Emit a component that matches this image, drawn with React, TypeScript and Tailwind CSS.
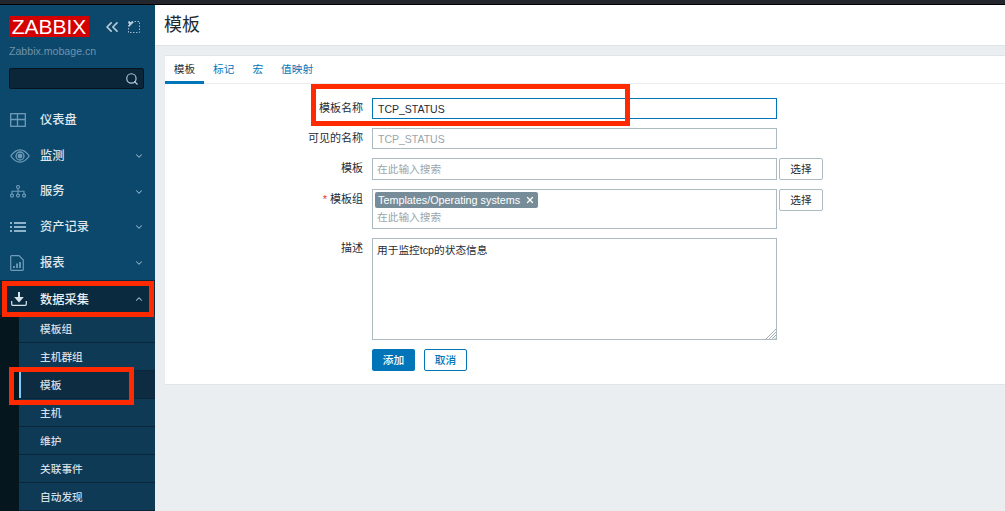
import { ChevronDown, ChevronUp, ChevronsLeft, Search, X } from 'lucide-react';
import type { ReactNode } from 'react';

const cjk = "font-['Liberation_Sans','Noto_Sans_CJK_SC',sans-serif]";

const iconDashboard = (
  <svg width="16" height="14" viewBox="0 0 16 14" fill="none" stroke="#6f9bb8" strokeWidth="1.3">
    <rect x="0.7" y="0.7" width="14.6" height="12.6" />
    <path d="M0.7 6.5H15.3M7.5 0.7V13.3" />
  </svg>
);
const iconEye = (
  <svg width="20" height="14" viewBox="0 0 20 14" fill="none" stroke="#6f9bb8" strokeWidth="1.3">
    <path d="M0.8 7C4 2.4 7 0.8 10 0.8S16 2.4 19.2 7C16 11.6 13 13.2 10 13.2S4 11.6 0.8 7Z" />
    <circle cx="10" cy="7" r="4" />
    <circle cx="10" cy="7" r="1.8" fill="#6f9bb8" />
  </svg>
);
const iconServices = (
  <svg width="16" height="13" viewBox="0 0 16 13" fill="none" stroke="#6f9bb8" strokeWidth="1.1">
    <circle cx="8" cy="2" r="1.5" />
    <circle cx="2" cy="10.6" r="1.5" />
    <circle cx="8" cy="10.6" r="1.5" />
    <circle cx="14" cy="10.6" r="1.5" />
    <path d="M8 3.5V9M2 9V6.3H14V9" />
  </svg>
);
const iconList = (
  <svg width="16" height="10" viewBox="0 0 16 10" fill="#8fb3ca">
    <rect x="0" y="0" width="2" height="2" />
    <rect x="0" y="4" width="2" height="2" />
    <rect x="0" y="8" width="2" height="2" />
    <rect x="4" y="0" width="12" height="2" />
    <rect x="4" y="4" width="12" height="2" />
    <rect x="4" y="8" width="12" height="2" />
  </svg>
);
const iconReport = (
  <svg width="14" height="16" viewBox="0 0 14 16" fill="none" stroke="#6f9bb8" strokeWidth="1.2">
    <path d="M0.7 1.5A0.8 0.8 0 0 1 1.5 0.7H9L13.3 5V14.5A0.8 0.8 0 0 1 12.5 15.3H1.5A0.8 0.8 0 0 1 0.7 14.5Z" />
    <path d="M4 13V11M7 13V8.5M10 13V7" strokeWidth="1.8" />
  </svg>
);
const iconDownload = (
  <svg width="16" height="14" viewBox="0 0 16 14" fill="none" stroke="#d7e4ec" strokeWidth="1.2">
    <path d="M0.7 9V12.3A1 1 0 0 0 1.7 13.3H14.3A1 1 0 0 0 15.3 12.3V9" />
    <path d="M8 0V7" strokeWidth="2" />
    <path d="M4.5 5.5L8 9.5L11.5 5.5Z" fill="#d7e4ec" />
  </svg>
);

const menu: { label: string; icon: ReactNode; chevron: boolean }[] = [
  { label: '仪表盘', icon: iconDashboard, chevron: false },
  { label: '监测', icon: iconEye, chevron: true },
  { label: '服务', icon: iconServices, chevron: true },
  { label: '资产记录', icon: iconList, chevron: true },
  { label: '报表', icon: iconReport, chevron: true },
];

const submenu = ['模板组', '主机群组', '模板', '主机', '维护', '关联事件', '自动发现'];

function Sidebar() {
  return (
    <aside className="w-[155px] shrink-0 bg-[#0c486c] flex flex-col overflow-hidden">
      <div className="flex items-center pl-[9px] pt-[11px]">
        <div className="w-[80px] h-[21px] bg-[#d40000] text-white text-[21px] leading-[21px] text-center font-['Liberation_Sans',sans-serif]">
          ZABBIX
        </div>
        <ChevronsLeft size={20} strokeWidth={2} className="ml-[13px] text-[#b7cbd8]" />
        <svg width="12" height="12" viewBox="0 0 12 12" fill="none" className="ml-[6px]">
          <rect x="0.5" y="0.5" width="11" height="11" stroke="#9db8c9" strokeDasharray="1.5 1.5" />
          <path d="M1 1H6L1 6Z" fill="#b7cbd8" />
        </svg>
      </div>
      <div className="pl-[9px] mt-[7px] text-[10.6px] leading-[14px] text-[#6f93aa] font-['Liberation_Sans',sans-serif]">
        Zabbix.mobage.cn
      </div>
      <div className="ml-[9px] mt-[10px] w-[135px] h-[22px] bg-[#0a2638] border border-[#051520] rounded-[2px] flex items-center justify-end pr-[4px]">
        <Search size={14} strokeWidth={2} className="text-[#b7cbd8]" />
      </div>
      <nav className={`mt-[12px] ${cjk}`}>
        {menu.map((m) => (
          <div key={m.label} className="h-[35.8px] pt-[2px] flex items-center text-[12.25px] font-medium text-[#dde7ed]">
            <span className="w-[40px] pl-[10px] flex justify-start">{m.icon}</span>
            <span className="flex-1">{m.label}</span>
            {m.chevron && <ChevronDown size={10} strokeWidth={2.5} className="mr-[11px] text-[#8fb3ca]" />}
          </div>
        ))}
        <div className="h-[35px] pt-[3px] bg-[#0a2a3f] flex items-center text-[12.25px] font-medium text-[#e8eff3]">
          <span className="w-[40px] pl-[11px] flex justify-start">{iconDownload}</span>
          <span className="flex-1 pt-[2px]">数据采集</span>
          <ChevronUp size={10} strokeWidth={2.5} className="mr-[11px] text-[#b7cbd8]" />
        </div>
        <div className="bg-[#06161f] pl-[19px]">
          {submenu.map((s) => (
            <div
              key={s}
              className={`h-[28px] pt-[2px] pl-[21px] flex items-center text-[10.7px] font-medium text-[#d3dee5] border-b border-[#0a2638] ${
                s === '模板' ? 'bg-[#0d2c42] relative' : 'bg-[#0f3a56]'
              }`}
            >
              {s === '模板' && <span className="absolute left-0 top-0 bottom-0 w-[2px] bg-[#7fcbfa]" />}
              {s}
            </div>
          ))}
        </div>
      </nav>
    </aside>
  );
}

function Row({ label, required, className, children }: { label: string; required?: boolean; className?: string; children: ReactNode }) {
  return (
    <div className={`flex items-start ${className ?? ''}`}>
      <div className="w-[207px] pr-[9px] text-right text-[11px] leading-[21px] text-[#1f2c33]">
        {required && <span className="text-[#e33734] mr-[3px]">*</span>}
        {label}
      </div>
      {children}
    </div>
  );
}

function SelectButton() {
  return (
    <button className="ml-[2px] w-[44px] h-[22px] bg-white border border-[#acbbc2] rounded-[2px] text-[10.7px] text-[#1f2c33]">
      选择
    </button>
  );
}

export default function App() {
  return (
    <div className={`relative w-[1005px] h-[511px] overflow-hidden flex flex-col ${cjk}`}>
      <div className="h-[5px] shrink-0 bg-[#24262d] border-b border-black" />
      <div className="flex flex-1 min-h-0">
        <Sidebar />
        <main className="flex-1 bg-[#ebeef0] flex flex-col">
          <header className="h-[41px] shrink-0 bg-white border-b border-[#dfe4e7] pl-[9px] flex items-center text-[18px] text-[#1f2c33]">
            模板
          </header>
          <section className="ml-[10px] mt-[9px] h-[330px] bg-white border-t border-b border-[#dfe4e7]">
            <div className="h-[28px] border-b border-[#ebeef0] flex text-[10.7px] text-[#0275b8]">
              <div className="w-[39px] h-[28px] text-center leading-[26px] text-[#1f2c33] border-b-[3px] border-[#0275b8]">模板</div>
              <div className="ml-[9px] leading-[26px]">标记</div>
              <div className="ml-[18px] leading-[26px]">宏</div>
              <div className="ml-[18px] leading-[26px]">值映射</div>
            </div>
            <div className="pt-[14px]">
              <Row label="模板名称">
                <input
                  readOnly
                  value="TCP_STATUS"
                  className="w-[405px] h-[21px] border border-[#0275b8] px-[5px] text-[10.5px] text-[#1f2c33] outline-none font-['Liberation_Sans',sans-serif]"
                />
              </Row>
              <Row label="可见的名称" className="mt-[9px]">
                <input
                  readOnly
                  value="TCP_STATUS"
                  className="w-[405px] h-[21px] border border-[#acbbc2] px-[5px] text-[10.5px] text-[#9aa5ab] outline-none font-['Liberation_Sans',sans-serif]"
                />
              </Row>
              <Row label="模板" className="mt-[9px]">
                <div className="w-[405px] h-[22px] border border-[#acbbc2] px-[4px] text-[10.7px] leading-[20px] text-[#9aa5ab]">在此输入搜索</div>
                <SelectButton />
              </Row>
              <Row label="模板组" required className="mt-[9px]">
                <div className="w-[405px] h-[40px] border border-[#acbbc2] pl-[2px] pt-[2px] text-[10.7px]">
                  <div className="w-[163px] h-[16px] bg-[#768d99] rounded-[2px] text-white flex items-center pl-[3px] leading-[16px] text-[10.8px] font-['Liberation_Sans',sans-serif]">
                    <span className="whitespace-nowrap">Templates/Operating systems</span>
                    <X size={10} strokeWidth={3} className="ml-[5px] shrink-0" />
                  </div>
                  <div className="pl-[2px] mt-[1px] leading-[17px] text-[#9aa5ab]">在此输入搜索</div>
                </div>
                <SelectButton />
              </Row>
              <Row label="描述" className="mt-[9px]">
                <div className="relative w-[405px] h-[102px] border border-[#acbbc2] px-[4px] text-[10.7px] leading-[22px] text-[#1f2c33]">
                  用于监控tcp的状态信息
                  <svg width="10" height="10" viewBox="0 0 10 10" className="absolute right-0 bottom-0" stroke="#8f979b" strokeWidth="0.8">
                    <path d="M0 10L10 0M3 10L10 3M6 10L10 6M8.5 10L10 8.5" />
                  </svg>
                </div>
              </Row>
              <div className="flex pl-[207px] mt-[9px] text-[10.7px] font-medium">
                <button className="w-[43px] h-[22px] bg-[#0275b8] rounded-[2px] text-white">添加</button>
                <button className="ml-[9px] w-[43px] h-[22px] bg-white border border-[#0275b8] rounded-[2px] text-[#0275b8]">取消</button>
              </div>
            </div>
          </section>
        </main>
      </div>

      {/* red annotation boxes drawn over the screenshot */}
      <div className="absolute left-[2px] top-[281px] w-[152px] h-[36px] border-[5px] border-[#ff2a00]" />
      <div className="absolute left-[9px] top-[367px] w-[125px] h-[38px] border-[5px] border-[#ff2a00]" />
      <div className="absolute left-[311px] top-[84px] w-[319px] h-[42px] border-[5px] border-[#ff2a00]" />
    </div>
  );
}
